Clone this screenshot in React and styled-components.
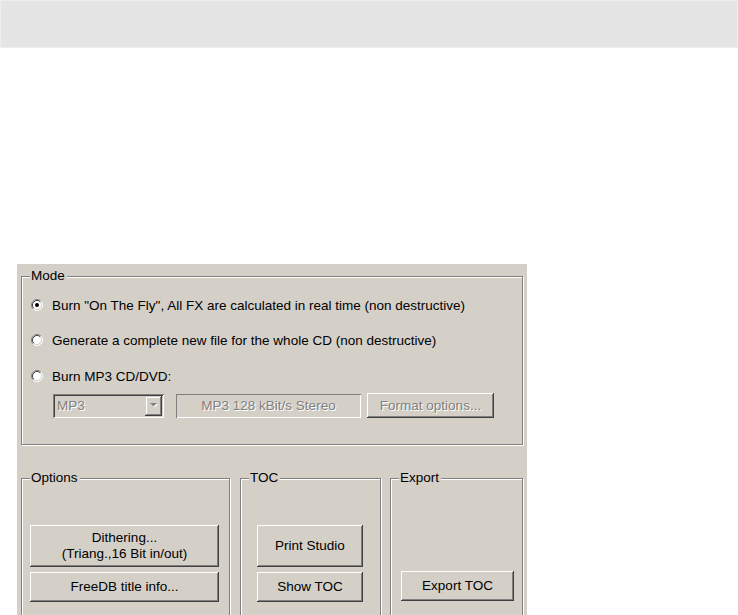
import React from "react";
import styled, { createGlobalStyle } from "styled-components";

const Global = createGlobalStyle`
  html, body { margin: 0; padding: 0; background: #ffffff; overflow: hidden; }
  body { font-family: "Liberation Sans", Arial, sans-serif; font-size: 13.5px; color: #000; }
`;

const TopBar = styled.div`
  height: 46px;
  background: #e5e5e5;
  border: 1px solid #eeeeee;
`;

const Dialog = styled.div`
  margin: 216px 0 0 17px;
  width: 510px;
  height: 360px;
  box-sizing: border-box;
  padding: 12px 4px 0 4px;
  background: #d4d0c8;
`;

const Group = styled.div`
  position: relative;
  box-sizing: border-box;
  width: ${(p) => p.$w}px;
  height: ${(p) => p.$h}px;
  border: 1px solid #808080;
  box-shadow: inset 1px 1px 0 #ffffff, 1px 1px 0 #ffffff;
  padding: ${(p) => p.$pad || "0"};
  margin-left: ${(p) => p.$ml || 0}px;
  display: flex;
  flex-direction: column;
  align-items: flex-start;
`;

const Legend = styled.span`
  position: absolute;
  top: -9px;
  left: 8px;
  padding: 0 2px 0 1px;
  line-height: 16px;
  background: #d4d0c8;
`;

const RadioRow = styled.label`
  display: flex;
  align-items: center;
  height: 16px;
  gap: 9px;
  margin-top: ${(p) => p.$mt}px;
  white-space: nowrap;
`;

const ControlRow = styled.div`
  display: flex;
  align-items: center;
  margin-top: 9px;
  margin-left: 22px;
`;

const Combo = styled.div`
  box-sizing: border-box;
  width: 111px;
  height: 24px;
  display: flex;
  align-items: center;
  justify-content: space-between;
  padding: 2px 2px 2px 4px;
  background: #d4d0c8;
  box-shadow: inset 1px 1px 0 #808080, inset -1px -1px 0 #ffffff, inset 2px 2px 0 #404040, inset -2px -2px 0 #d4d0c8;
`;

const Disabled = styled.span`
  color: #808080;
  text-shadow: 1px 1px 0 #ffffff;
  white-space: nowrap;
`;

const DropBtn = styled.div`
  width: 17px;
  height: 20px;
  display: flex;
  align-items: center;
  justify-content: center;
  background: #d4d0c8;
  box-shadow: inset -1px -1px 0 #404040, inset 1px 1px 0 #d4d0c8, inset -2px -2px 0 #808080, inset 2px 2px 0 #ffffff;
`;

const TextBox = styled.div`
  box-sizing: border-box;
  width: 185px;
  height: 24px;
  margin-left: 12px;
  display: flex;
  align-items: center;
  justify-content: center;
  background: #d4d0c8;
  box-shadow: inset 1px 1px 0 #808080, inset -1px -1px 0 #ffffff;
`;

const Button = styled.div`
  box-sizing: border-box;
  width: ${(p) => p.$w}px;
  height: ${(p) => p.$h}px;
  margin-left: ${(p) => p.$ml || 0}px;
  display: flex;
  align-items: center;
  justify-content: center;
  text-align: center;
  line-height: 16px;
  background: #d4d0c8;
  white-space: pre-line;
  box-shadow: inset -1px -1px 0 #404040, inset 1px 1px 0 #ffffff, inset -2px -2px 0 #808080, inset 2px 2px 0 #d4d0c8;
`;

const BottomRow = styled.div`
  display: flex;
  margin-top: 33px;
`;

const ButtonStack = styled.div`
  display: flex;
  flex-direction: column;
  gap: 5px;
`;

const Radio = ({ checked }) => (
  <svg width="12" height="12" viewBox="0 0 12 12">
    <circle cx="6" cy="6" r="5" fill="#ffffff" />
    <path d="M2.11 9.89 A5.5 5.5 0 0 1 9.89 2.11" fill="none" stroke="#808080" strokeWidth="1" />
    <path d="M9.89 2.11 A5.5 5.5 0 0 1 2.11 9.89" fill="none" stroke="#ffffff" strokeWidth="1" />
    <path d="M2.82 9.18 A4.5 4.5 0 0 1 9.18 2.82" fill="none" stroke="#404040" strokeWidth="1" />
    <path d="M9.18 2.82 A4.5 4.5 0 0 1 2.82 9.18" fill="none" stroke="#d4d0c8" strokeWidth="1" />
    {checked && <circle cx="6" cy="6" r="2" fill="#000000" />}
  </svg>
);

const Arrow = () => (
  <svg width="8" height="5" viewBox="0 0 8 5">
    <path d="M1 1 H8 L4.5 4.5 Z" fill="#ffffff" />
    <path d="M0 0 H7 L3.5 3.5 Z" fill="#808080" />
  </svg>
);

export default function App() {
  return (
    <>
      <Global />
      <TopBar />
      <Dialog>
        <Group $w={502} $h={169} $pad="0 0 0 9px">
          <Legend>Mode</Legend>
          <RadioRow $mt={20}>
            <Radio checked />
            <span>Burn "On The Fly", All FX are calculated in real time (non destructive)</span>
          </RadioRow>
          <RadioRow $mt={19}>
            <Radio />
            <span>Generate a complete new file for the whole CD (non destructive)</span>
          </RadioRow>
          <RadioRow $mt={20}>
            <Radio />
            <span>Burn MP3 CD/DVD:</span>
          </RadioRow>
          <ControlRow>
            <Combo>
              <Disabled>MP3</Disabled>
              <DropBtn><Arrow /></DropBtn>
            </Combo>
            <TextBox>
              <Disabled>MP3 128 kBit/s Stereo</Disabled>
            </TextBox>
            <Button $w={127} $h={25} $ml={6}>
              <Disabled>Format options...</Disabled>
            </Button>
          </ControlRow>
        </Group>
        <BottomRow>
          <Group $w={209} $h={160} $pad="46px 0 0 8px">
            <Legend>Options</Legend>
            <ButtonStack>
              <Button $w={189} $h={42}>{"Dithering...\n(Triang.,16 Bit in/out)"}</Button>
              <Button $w={189} $h={30}>FreeDB title info...</Button>
            </ButtonStack>
          </Group>
          <Group $w={141} $h={160} $ml={10} $pad="46px 0 0 16px">
            <Legend>TOC</Legend>
            <ButtonStack>
              <Button $w={106} $h={42}>Print Studio</Button>
              <Button $w={106} $h={30}>Show TOC</Button>
            </ButtonStack>
          </Group>
          <Group $w={133} $h={160} $ml={9} $pad="92px 0 0 10px">
            <Legend>Export</Legend>
            <Button $w={113} $h={30}>Export TOC</Button>
          </Group>
        </BottomRow>
      </Dialog>
    </>
  );
}
